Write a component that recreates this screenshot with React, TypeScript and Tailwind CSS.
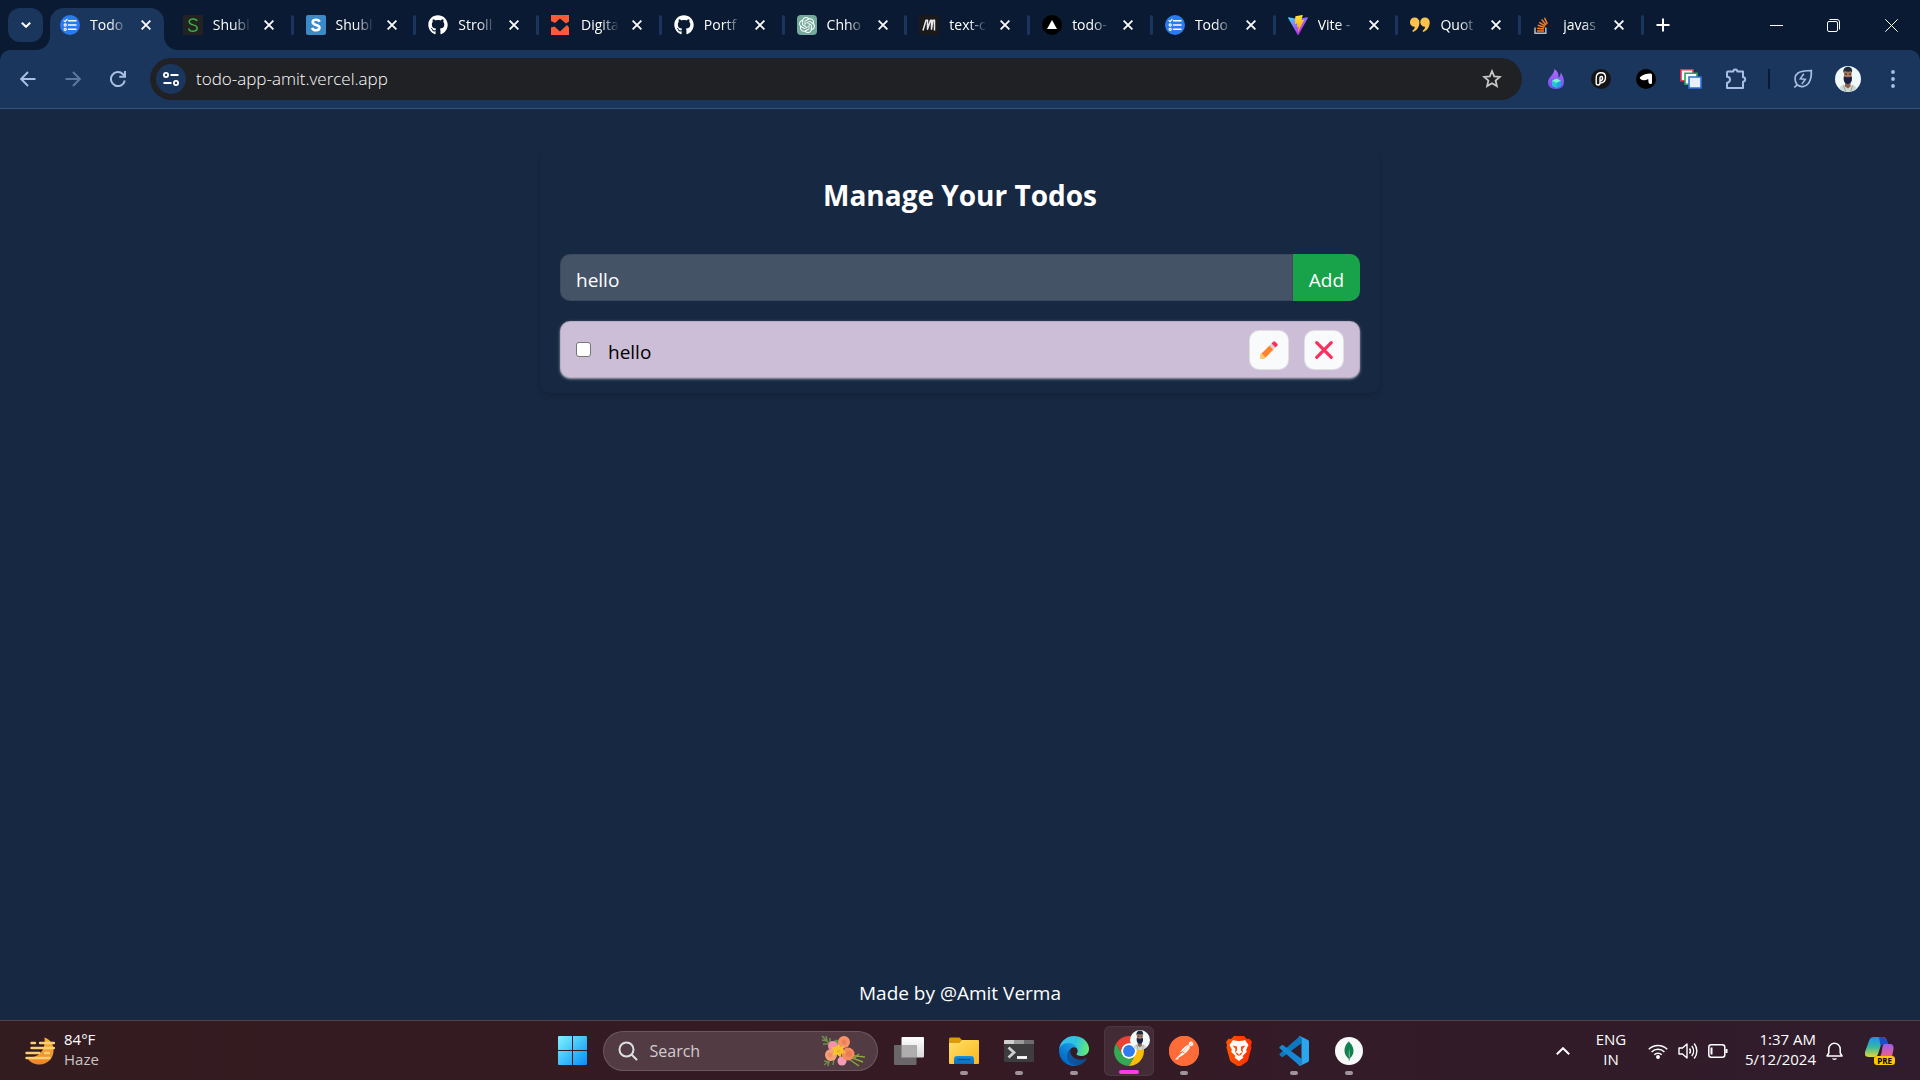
import React, { useState } from "react";
import { FaGithub } from "react-icons/fa";
import { SiPostman, SiMongodb, SiOpenai } from "react-icons/si";

type IconProps = { className?: string };

const TodoFavicon = () => (
  <svg viewBox="0 0 20 20" className="size-5" fill="none">
    <circle cx="10" cy="10" r="10" fill="#2b7af0" />
    <g stroke="#fff" strokeWidth="1.5" strokeLinecap="round">
      <path d="M8.5 5.7h7.5M8.5 10h7.5M8.5 14.3h7.5" />
      <path d="M4 5.6l1.1 1L7 4.3" strokeWidth="1.2" />
      <circle cx="5.2" cy="10" r="1.1" strokeWidth="1.1" />
      <circle cx="5.2" cy="14.3" r="1.1" strokeWidth="1.1" />
    </g>
  </svg>
);

const GreenSFavicon = () => (
  <svg viewBox="0 0 20 20" className="size-5" fill="none">
    <path d="M0 0h20v20H0z" fill="#222" />
    <path d="M14 6.2C13.6 4.5 12 3.9 10.200 3.900 8 3.900 6.200 4.900 6.200 6.700c0 4.200 8 2.200 8 6.400 0 2-1.900 3.100-4.100 3.100-2.300 0-4.100-1-4.400-2.900" stroke="#3fae45" strokeWidth="1.500" />
  </svg>
);

const BlueSFavicon = () => (
  <svg viewBox="0 0 20 20" className="size-5" fill="none">
    <rect width="20" height="20" rx="2" fill="#3a8ac8" />
    <path d="M13.600 6.800C13 5.300 11.700 4.800 10.100 4.800 8 4.800 6.700 5.800 6.700 7.200c0 3.500 6.800 1.900 6.800 5.400 0 1.700-1.500 2.700-3.500 2.700-1.900 0-3.300-.8-3.800-2.500" stroke="#fff" strokeWidth="2.600" />
  </svg>
);

const DigitFavicon = () => (
  <svg viewBox="0 0 20 20" className="size-5" fill="#ff5a36">
    <path d="M0 0h18v6.500l-3 2L9 3.500 4 8 0 6z" />
    <path d="M0 20h18v-7.500l-2-2.500-7 6.500-5.500-5L0 12.500z" />
  </svg>
);

const GptFavicon = () => (
  <span className="flex size-5 items-center justify-center rounded bg-[#74aa9c]">
    <SiOpenai className="size-4 text-white" />
  </span>
);

const MFavicon = () => (
  <svg viewBox="0 0 20 20" className="size-5" fill="none">
    <path d="M0 0h20v20H0z" fill="#1a1a1c" />
    <path d="M4 15.500L7 5.200h1.500v9L11.500 5.200H12.500v9L14 5.200h1.500v10.300" stroke="#e8e8e8" strokeWidth="1.500" strokeLinejoin="round" />
  </svg>
);

const TriangleFavicon = () => (
  <svg viewBox="0 0 20 20" className="size-5">
    <circle cx="10" cy="10" r="10" fill="#000" />
    <path d="M10 5l5 9H5z" fill="#fff" />
  </svg>
);

const ViteFavicon = () => (
  <svg viewBox="0 0 256 257" className="size-5">
    <defs>
      <linearGradient id="viteA" x1="0" x2="0.58" y1="0.08" y2="0.77">
        <stop offset="0" stopColor="#41d1ff" />
        <stop offset="1" stopColor="#bd34fe" />
      </linearGradient>
      <linearGradient id="viteB" x1="0.43" x2="0.5" y1="0.02" y2="0.9">
        <stop offset="0" stopColor="#ffea83" />
        <stop offset="0.1" stopColor="#ffdd35" />
        <stop offset="1" stopColor="#ffa800" />
      </linearGradient>
    </defs>
    <path fill="url(#viteA)" d="M255.153 37.938L134.897 252.976c-2.483 4.440-8.862 4.466-11.382.048L.875 37.958c-2.746-4.814 1.371-10.646 6.827-9.670l120.385 21.517a6.537 6.537 0 0 0 2.322-.004l117.867-21.483c5.438-.991 9.574 4.796 6.877 9.620Z" />
    <path fill="url(#viteB)" d="M185.432.063L96.440 17.501a3.268 3.268 0 0 0-2.634 3.014l-5.474 92.456a3.268 3.268 0 0 0 3.997 3.378l24.777-5.718c2.318-.535 4.413 1.507 3.936 3.838l-7.361 36.047c-.495 2.426 1.782 4.500 4.151 3.780l15.304-4.649c2.372-.720 4.652 1.360 4.150 3.788l-11.698 56.621c-.732 3.542 3.979 5.473 5.943 2.437l1.313-2.028l72.516-144.720c1.215-2.423-.880-5.186-3.540-4.672l-25.505 4.922c-2.396.462-4.435-1.770-3.759-4.114l16.646-57.705c.677-2.350-1.370-4.583-3.769-4.113Z" />
  </svg>
);

const QuoteFavicon = () => (
  <svg viewBox="0 0 20 20" className="size-5" fill="#fcc24c">
    <path d="M4.700 2.500a4.600 4.600 0 0 1 4.700 4.800c0 4.500-2.400 8.200-6.400 9.700l-.8-1.300c1.600-.9 2.500-2.200 2.600-3.900A4.500 4.500 0 0 1 0 7.200a4.600 4.600 0 0 1 4.700-4.700z" />
    <path d="M15 2.500a4.600 4.600 0 0 1 4.700 4.800c0 4.500-2.400 8.200-6.400 9.700l-.8-1.300c1.600-.9 2.500-2.200 2.600-3.900a4.500 4.500 0 0 1-4.800-4.600A4.600 4.600 0 0 1 15 2.500z" />
  </svg>
);

const StackFavicon = () => (
  <svg viewBox="0 0 20 20" className="size-5" fill="none">
    <path d="M2 12.500v5.800h10.800v-5.800" stroke="#bcbbbb" strokeWidth="1.500" />
    <path d="M4 16h7M4.100 13.200l6.900.7M4.800 10.300l6.700 2M6.200 7.300l6 3.500M8.600 4.600l4.500 5.300M11.500 2.700l2.800 6.200" stroke="#f48024" strokeWidth="1.500" />
  </svg>
);

const GithubFavicon = () => <FaGithub className="size-5 text-white" />;

const tabs: { title: string; Icon: React.FC }[] = [
  { title: "Todo", Icon: TodoFavicon },
  { title: "Shubl", Icon: GreenSFavicon },
  { title: "Shubl", Icon: BlueSFavicon },
  { title: "Stroll", Icon: GithubFavicon },
  { title: "Digita", Icon: DigitFavicon },
  { title: "Portf", Icon: GithubFavicon },
  { title: "Chho", Icon: GptFavicon },
  { title: "text-c", Icon: MFavicon },
  { title: "todo-", Icon: TriangleFavicon },
  { title: "Todo", Icon: TodoFavicon },
  { title: "Vite -", Icon: ViteFavicon },
  { title: "Quot", Icon: QuoteFavicon },
  { title: "javas", Icon: StackFavicon },
];

const CloseIcon = () => (
  <svg viewBox="0 0 10 10" className="size-2.5" stroke="currentColor" strokeWidth="1.800">
    <path d="M.6.6l8.800 8.800M9.400.6L.6 9.400" />
  </svg>
);

function Tab({ title, Icon, active }: { title: string; Icon: React.FC; active: boolean }) {
  return (
    <div className={`relative flex h-[50px] min-w-0 flex-1 items-center ${active ? "pl-2.5" : "pl-3"}`}>
      {active && (
        <span className="absolute top-2 right-[7px] bottom-0 left-0 rounded-t-[14px] bg-[#1b365d]">
          <svg viewBox="0 0 14 14" className="absolute bottom-0 -left-[14px] size-3.5" fill="#1b365d">
            <path d="M14 0v14H0A14 14 0 0 0 14 0z" />
          </svg>
          <svg viewBox="0 0 14 14" className="absolute -right-[14px] bottom-0 size-3.5" fill="#1b365d">
            <path d="M0 0v14h14A14 14 0 0 1 0 0z" />
          </svg>
        </span>
      )}
      <span className="relative shrink-0">
        <Icon />
      </span>
      <span className="relative ml-2.5 w-10 text-[14px] leading-5 whitespace-nowrap text-white [mask-image:linear-gradient(to_right,black_20px,transparent_38px)]">
        {title}
      </span>
      <button aria-label={`Close ${title}`} className="relative ml-1.5 flex size-5 shrink-0 items-center justify-center text-white">
        <CloseIcon />
      </button>
      {!active && <span className="ml-auto h-5 w-[3px] shrink-0 rounded bg-[#1b365d]" />}
    </div>
  );
}

function TabStrip() {
  return (
    <div className="flex h-[50px] bg-[#0a1a33]">
      <div className="w-[50px] shrink-0 pt-2 pl-2">
        <button aria-label="Search tabs" className="flex h-[34px] w-[35px] items-center justify-center rounded-xl bg-[#1b365d] text-white">
          <svg viewBox="0 0 10 6" className="h-1.5 w-2.5" fill="none" stroke="currentColor" strokeWidth="2">
            <path d="M.8.8L5 4.800 9.200.8" />
          </svg>
        </button>
      </div>
      <div className="flex min-w-0 flex-1">
        {tabs.map((tab, i) => (
          <Tab key={i} {...tab} active={i === 0} />
        ))}
      </div>
      <div className="flex w-[276px] shrink-0 items-center text-white">
        <button aria-label="New tab" className="ml-1 flex size-[30px] items-center justify-center">
          <svg viewBox="0 0 14 14" className="size-3.5" stroke="currentColor" strokeWidth="2">
            <path d="M7 .5v13M.5 7h13" />
          </svg>
        </button>
        <div className="ml-auto flex">
          <button aria-label="Minimize" className="flex h-[50px] w-[57px] items-center justify-center">
            <svg viewBox="0 0 13 13" className="size-[13px]" stroke="currentColor">
              <path d="M0 6.500h13" />
            </svg>
          </button>
          <button aria-label="Restore" className="flex h-[50px] w-[57px] items-center justify-center">
            <svg viewBox="0 0 13 13" className="size-[13px]" fill="none" stroke="currentColor">
              <rect x=".5" y="2.500" width="10" height="10" rx="1.500" />
              <path d="M2.500.5H10A2.500 2.500 0 0 1 12.500 3v7.500" />
            </svg>
          </button>
          <button aria-label="Close window" className="flex h-[50px] w-[58px] items-center justify-center">
            <svg viewBox="0 0 13 13" className="size-[13px]" stroke="currentColor">
              <path d="M.3.300l12.400 12.400M12.700.3L.3 12.700" />
            </svg>
          </button>
        </div>
      </div>
    </div>
  );
}

const Avatar = ({ className }: IconProps) => (
  <svg viewBox="0 0 26 26" className={className}>
    <defs>
      <clipPath id="avatarClip">
        <circle cx="13" cy="13" r="13" />
      </clipPath>
    </defs>
    <g clipPath="url(#avatarClip)">
      <path d="M0 0h26v26H0z" fill="#f1fafb" />
      <path d="M4 26c0-4 1-6 5-7.500l4 3 4-3c4 1.500 5 3.500 5 7.500z" fill="#cfd8d2" />
      <path d="M10 17h5.500v3.500L13 22.500l-3-2z" fill="#8d6149" />
      <path d="M9 5h7.500v7c0 4-1.500 6-3.700 6S9 16 9 12z" fill="#a87a60" />
      <path d="M8.500 7C7.800 3.500 9.500 1 12.700.8c3.500 0 5 2.200 4.300 6.200l-1-1.700c-2.200.6-4.400.5-6.500-.2z" fill="#202b35" />
      <path d="M8.700 10.500c2.800 1 5.500 1 8.200 0v3.500c-.6 2.600-2 4-4.100 4S9.300 16.600 8.700 14z" fill="#1b2145" />
      <path d="M9.800 8h2.200M14 8h2.200" stroke="#2c2220" strokeWidth="1" />
      <path d="M8.500 19.500L11 26M17.500 19.500L15.500 26" stroke="#8fa59a" strokeWidth="1" />
    </g>
  </svg>
);

const toolBtn = "flex h-[50px] w-[45px] items-center justify-center";

function Toolbar() {
  return (
    <div className="bg-[#0a1a33]">
      <div className="flex h-[59px] items-center rounded-t-[10px] border-b border-[#36507a] bg-[#1b365d] text-[#a8bfe3]">
        <div className="flex w-[150px] shrink-0 items-center pl-[5px]">
          <button aria-label="Back" className={toolBtn}>
            <svg viewBox="0 0 16 16" className="size-4" fill="none" stroke="currentColor" strokeWidth="1.900">
              <path d="M15.500 8H1.500M8 1L1.200 8 8 15" />
            </svg>
          </button>
          <button aria-label="Forward" className={`${toolBtn} text-[#5e799f]`}>
            <svg viewBox="0 0 16 16" className="size-4" fill="none" stroke="currentColor" strokeWidth="1.900">
              <path d="M.5 8h14M8 1l6.800 7L8 15" />
            </svg>
          </button>
          <button aria-label="Reload" className={toolBtn}>
            <svg viewBox="0 0 16 16" className="size-4" fill="none" stroke="currentColor" strokeWidth="2">
              <path d="M14.800 9.500A7 7 0 1 1 13 3.200L15 5.500M15 0v5.800H9.300" />
            </svg>
          </button>
        </div>
        <div className="flex h-[42px] min-w-0 flex-1 items-center rounded-full bg-[#202124] pr-5 pl-1.5">
          <button aria-label="View site information" className="flex size-[30px] shrink-0 items-center justify-center rounded-full bg-[#1b365d] text-white">
            <svg viewBox="0 0 16 14" className="h-3.5 w-4" fill="none" stroke="currentColor" strokeWidth="1.800">
              <circle cx="3" cy="3" r="2.100" />
              <path d="M7.500 3h8M.5 11h8" />
              <circle cx="13" cy="11" r="2.100" />
            </svg>
          </button>
          <input
            aria-label="Address and search bar"
            defaultValue="todo-app-amit.vercel.app"
            className="ml-2.5 min-w-0 flex-1 bg-transparent text-[17px] leading-6 font-light text-white outline-none"
          />
          <button aria-label="Bookmark this tab" className="shrink-0 text-[#c7c7c7]">
            <svg viewBox="0 0 20 20" className="size-5" fill="none" stroke="currentColor" strokeWidth="1.800">
              <path d="M10 2.200l2.200 5.200 5.700.5-4.300 3.700 1.300 5.500L10 14.200l-4.900 2.900 1.300-5.500L2.100 7.900l5.700-.5z" />
            </svg>
          </button>
        </div>
        <div className="flex w-[398px] shrink-0 items-center pl-[11px]">
          <button aria-label="Flame extension" className={toolBtn}>
            <svg viewBox="0 0 20 20" className="size-5">
              <defs>
                <linearGradient id="flame" x1="0" x2="0" y1="0" y2="1">
                  <stop offset="0" stopColor="#b56bff" />
                  <stop offset="1" stopColor="#6a4df0" />
                </linearGradient>
              </defs>
              <path d="M8.500 0c3 2 4.500 5 4 8.500 1.500-.5 2.300-2.500 2-5 1.800 2 3.500 5.500 3.500 9.500 0 4.500-3 7-8 7s-8-2.500-8-6.500c0-3 1.500-4.500 3-6.500 1.800-2.200 3.500-4 3.500-7z" fill="url(#flame)" />
              <path d="M10.500 9.500l4.500 2.300v5L10.500 19 6 16.800v-5z" fill="#22c7d6" />
              <path d="M10.500 9.500l4.500 2.300-4.500 2.300L6 11.800z" fill="#7df0d0" />
              <path d="M10.500 14.100l4.500-2.300v5L10.500 19z" fill="#1fa8e0" />
            </svg>
          </button>
          <button aria-label="Paperclip extension" className={toolBtn}>
            <svg viewBox="0 0 20 20" className="size-5" fill="none">
              <circle cx="10" cy="10" r="10" fill="#151515" />
              <path d="M9 12.500V8.800c0-1.700 2.600-1.700 2.600.2 0 1.800-1 2.700-2.600 2.900M9 11.900v2.300c0 2.300-3.800 2.300-3.800 0V9c0-3.500 2.300-5.200 5-5.200 2.600 0 4.300 1.700 4.300 4.500 0 3-2 5.300-4.700 5.700" stroke="#fff" strokeWidth="1.400" />
            </svg>
          </button>
          <button aria-label="Arrow extension" className={toolBtn}>
            <svg viewBox="0 0 20 20" className="size-5">
              <circle cx="10" cy="10" r="10" fill="#000" />
              <path d="M4 8.200Q6 6 9 5.200q3-.8 5.800-.7 1.200 0 1.200 1.500v7.500q0 1.800-1.500 1.500-2-.3-2-1.800l-.3-3.200q-2 1.200-4.500 1.200-2.700-.2-3.700-1.800-.5-.7 0-1.200z" fill="#fff" />
            </svg>
          </button>
          <button aria-label="Windows extension" className={toolBtn}>
            <svg viewBox="0 0 22 20" className="h-5 w-[22px]">
              <path d="M1 .8h12v11H1z" fill="#fff" stroke="#e8315b" strokeWidth="1.600" />
              <path d="M5 4.300h12v11H5z" fill="#fff" stroke="#28a35a" strokeWidth="1.600" />
              <path d="M9 8h12v11H9z" fill="#e8f0ff" stroke="#2f6fe0" strokeWidth="1.600" />
            </svg>
          </button>
          <button aria-label="Extensions" className={toolBtn}>
            <svg viewBox="0 0 22 22" className="size-[22px]" fill="none" stroke="currentColor" strokeWidth="2" strokeLinejoin="round">
              <path d="M3 3.500h5.300a2 2 0 0 1 4 0H18v5.800a2.200 2.200 0 0 1 0 4.400V20H2v-5.300a3 3 0 0 0 0-6V4.500a1 1 0 0 1 1-1z" />
            </svg>
          </button>
          <span className="mx-2.5 h-5 w-0.5 bg-[#0a1a33]" />
          <button aria-label="Energy saver" className={toolBtn}>
            <svg viewBox="0 0 20 20" className="size-5" fill="none" stroke="currentColor" strokeWidth="1.700">
              <path d="M1.300 18.500l2.800-2.700C1 11 1.500 6.500 5 4c3.500-2.300 8-2 13.300-2.500.3 5-.3 9.500-3 13-3 3.700-7.600 4-11.200 1.300" />
              <path d="M10.800 4.800L7.300 9.800l5 .5-3.500 4.800" strokeWidth="1.500" />
            </svg>
          </button>
          <button aria-label="Profile" className={toolBtn}>
            <Avatar className="size-[26px]" />
          </button>
          <button aria-label="Menu" className={toolBtn}>
            <svg viewBox="0 0 4 18" className="h-[18px] w-1" fill="currentColor">
              <circle cx="2" cy="2" r="1.900" />
              <circle cx="2" cy="9" r="1.900" />
              <circle cx="2" cy="16" r="1.900" />
            </svg>
          </button>
        </div>
      </div>
    </div>
  );
}

const PencilIcon = () => (
  <svg viewBox="0 0 20 20" className="size-5">
    <path d="M1.300 14.500L3 13l4 4-1.800 2H1z" fill="#ffc56e" />
    <path d="M2.600 13.400L10.500 5.500l4 4-7.900 7.900z" fill="#ff822d" />
    <path d="M10.500 5.500l2-2 4 4-2 2z" fill="#d3d3d3" />
    <path d="M12.500 3.500l1.700-1.800q1-1 2 0l2.100 2.100q1 1 0 2L16.500 7.500z" fill="#f92f60" />
  </svg>
);

const CrossIcon = () => (
  <svg viewBox="0 0 20 20" className="size-5" stroke="#f92f60" strokeWidth="3.200" strokeLinecap="round">
    <path d="M2.700 2.700l14.600 14.600M17.300 2.700L2.700 17.300" />
  </svg>
);

function TodoPage() {
  const [text, setText] = useState("hello");
  const [done, setDone] = useState(false);
  const actionBtn = "flex size-10 shrink-0 items-center justify-center rounded-[10px] border border-black/10 bg-gray-50";
  return (
    <main className="flex flex-1 flex-col bg-[#172842] pt-10 text-white">
      <div className="mx-auto w-full max-w-[840px] rounded-[10px] px-5 py-[15px] shadow-md">
        <h1 className="mt-[11px] mb-[39px] text-center text-[28px] leading-10 font-bold">Manage Your Todos</h1>
        <form className="mb-5 flex h-[47px]" onSubmit={(e) => e.preventDefault()}>
          <input
            aria-label="New todo"
            value={text}
            onChange={(e) => setText(e.target.value)}
            className="min-w-0 flex-1 rounded-l-[10px] border border-black/10 bg-white/20 px-[15px] pt-1.5 text-[19px] outline-none"
          />
          <button className="w-[67px] shrink-0 rounded-r-[10px] bg-[#18a34a] pt-1.5 text-[19px]">Add</button>
        </form>
        <div className="flex h-[57px] items-center rounded-[10px] border border-black/10 bg-[#ccbed7] px-[15px] text-black shadow-sm shadow-white/50">
          <input
            id="todo-1"
            type="checkbox"
            checked={done}
            onChange={() => setDone(!done)}
            className="size-[15px] shrink-0 appearance-none rounded-[3px] border border-[#767676] bg-white checked:bg-blue-600"
          />
          <label htmlFor="todo-1" className="ml-[17px] flex-1 pt-1 text-[19px] leading-[30px]">
            hello
          </label>
          <div className="flex gap-[15px]">
            <button aria-label="Edit todo" className={actionBtn}>
              <PencilIcon />
            </button>
            <button aria-label="Delete todo" className={actionBtn}>
              <CrossIcon />
            </button>
          </div>
        </div>
      </div>
      <footer className="mt-auto pb-3 text-center text-[19px] leading-[30px]">Made by @Amit Verma</footer>
    </main>
  );
}

const WeatherIcon = () => (
  <svg viewBox="0 0 30 28" className="h-7 w-[30px]" fill="none">
    <defs>
      <linearGradient id="moon" x1="0" x2="0" y1="0" y2="1">
        <stop offset="0" stopColor="#f9b43a" />
        <stop offset="1" stopColor="#f08323" />
      </linearGradient>
    </defs>
    <path d="M19.500.5C26 3 29 8 28.500 14.500 28 22 22 27.500 14.500 27.500 9 27.500 4.500 25 2 20.500c10 .5 19-5 17.500-20z" fill="url(#moon)" />
    <g stroke="#f8cf73" strokeWidth="2.400" strokeLinecap="round">
      <path d="M6.500 6h3.500M15 6h14M6.500 11h22.500M1.500 16h13M20 16h4M1.500 21h23" />
    </g>
  </svg>
);

const StartIcon = () => (
  <svg viewBox="0 0 29 29" className="size-[29px]">
    <defs>
      <linearGradient id="win" x1="0" x2="29" y1="0" y2="29" gradientUnits="userSpaceOnUse">
        <stop offset="0" stopColor="#84f3ff" />
        <stop offset="0.5" stopColor="#3fc1fb" />
        <stop offset="1" stopColor="#0a8cf5" />
      </linearGradient>
    </defs>
    <path fill="url(#win)" d="M1 0h13v14H0V1a1 1 0 0 1 1-1zM15 0h13a1 1 0 0 1 1 1v13H15zM0 15h14v14H1a1 1 0 0 1-1-1zM15 15h14v13a1 1 0 0 1-1 1H15z" />
  </svg>
);

const BouquetIcon = () => (
  <svg viewBox="0 0 44 32" className="h-8 w-11" fill="none">
    <g stroke="#6f8f4a" strokeWidth="1.500">
      <path d="M1 1l9 9M1 5l5 1M5 1l1 5M2 9h7M9 3v6M3 30l8-6M3 26l5 1M7 31l1-5M12 30l1-6" />
      <path d="M26 20l18 2M26 21l16 6M25 22l13 9M38 19l-6 5" stroke="#86a83c" />
    </g>
    <path d="M13 5c4-1 8 2 9 6l-6-1z" fill="#5f8f45" />
    <circle cx="12" cy="11" r="5" fill="#f58fae" />
    <circle cx="21" cy="26" r="4.500" fill="#f79ab8" />
    <circle cx="23" cy="7" r="6" fill="#f6936a" />
    <circle cx="10" cy="20" r="6" fill="#f6a07a" />
    <circle cx="27" cy="19" r="6.500" fill="#f28b60" />
    <circle cx="23" cy="7" r="2.500" fill="#ec7f56" />
    <circle cx="9" cy="20" r="2.500" fill="#ee8d66" />
    <circle cx="28" cy="19" r="3" fill="#e87c54" />
    <path d="M18 9l1.500 3 4-1-1.500 4 3 3-4.500.5-1 4-3.500-3-4.500 1 1.500-4.500-3-3.500 4.500-.5z" fill="#f6c32f" />
    <circle cx="17.500" cy="16" r="1.800" fill="#efb024" />
  </svg>
);

const TaskViewIcon = () => (
  <svg viewBox="0 0 30 28" className="h-7 w-[30px]">
    <defs>
      <linearGradient id="tv" x1="0" x2="0" y1="0" y2="1">
        <stop offset="0" stopColor="#fff" />
        <stop offset="1" stopColor="#d9d9d9" />
      </linearGradient>
    </defs>
    <rect x="7.500" width="22.500" height="20.500" rx="1" fill="url(#tv)" />
    <rect y="8" width="22.500" height="20" rx="1" fill="#6b6669" />
    <path d="M7.500 8h15v12.500h-15z" fill="#b0adae" />
  </svg>
);

const ExplorerIcon = () => (
  <svg viewBox="0 0 30 28" className="h-7 w-[30px]">
    <defs>
      <linearGradient id="folder" x1="0" x2="1" y1="0" y2="1">
        <stop offset="0" stopColor="#ffdf6a" />
        <stop offset="1" stopColor="#fbb81c" />
      </linearGradient>
      <linearGradient id="folderBlue" x1="0" x2="0" y1="0" y2="1">
        <stop offset="0" stopColor="#1690dc" />
        <stop offset="1" stopColor="#0a6ebd" />
      </linearGradient>
    </defs>
    <path d="M0 2a1.500 1.500 0 0 1 1.500-1.500h9L13 3h16v5H0z" fill="#dc9b0c" />
    <path d="M0 6h10.500L13 3h16a1 1 0 0 1 1 1v22a1 1 0 0 1-1 1H1a1 1 0 0 1-1-1z" fill="url(#folder)" />
    <path d="M5 27v-5a3 3 0 0 1 3-3h14a3 3 0 0 1 3 3v5z" fill="url(#folderBlue)" />
    <path d="M8.500 22.500h13" stroke="#0a4f93" strokeWidth="1.300" />
  </svg>
);

const TerminalIcon = () => (
  <svg viewBox="0 0 30 22" className="h-[22px] w-[30px]" fill="none">
    <rect width="30" height="22" rx="1.500" fill="#3d3d3f" />
    <path d="M1 0h9v4H0V1a1 1 0 0 1 1-1z" fill="#cfcfcf" />
    <path d="M10 0h10v4H10z" fill="#9a9a9a" />
    <path d="M20 0h9a1 1 0 0 1 1 1v3H20z" fill="#6d6d6d" />
    <path d="M4.500 7.500l5.500 5-5.500 5" stroke="#cfcfcf" strokeWidth="2.800" />
    <path d="M13 17.500h10" stroke="#fff" strokeWidth="2.800" />
  </svg>
);

const EdgeIcon = () => (
  <svg viewBox="0 0 256 256" className="size-[30px]">
    <defs>
      <linearGradient id="edgeA" x1="60" x2="240" y1="177" y2="177" gradientUnits="userSpaceOnUse">
        <stop offset="0" stopColor="#0c59a4" />
        <stop offset="1" stopColor="#114a8b" />
      </linearGradient>
      <linearGradient id="edgeB" x1="150" x2="40" y1="90" y2="220" gradientUnits="userSpaceOnUse">
        <stop offset="0" stopColor="#1b9de2" />
        <stop offset="1" stopColor="#0067c8" />
      </linearGradient>
      <linearGradient id="edgeC" x1="10" x2="250" y1="60" y2="130" gradientUnits="userSpaceOnUse">
        <stop offset="0" stopColor="#35c1f1" />
        <stop offset="0.500" stopColor="#2fc2df" />
        <stop offset="1" stopColor="#66eb6e" />
      </linearGradient>
    </defs>
    <path fill="url(#edgeA)" d="M231.050 190.540a93.730 93.730 0 0 1-10.540 4.710 101.870 101.870 0 0 1-35.900 6.460c-47.320 0-88.540-32.550-88.540-74.320a31.480 31.480 0 0 1 16.430-27.310c-42.800 1.800-53.800 46.400-53.800 72.530 0 73.880 68.090 81.370 82.760 81.370 7.910 0 19.840-2.300 27-4.560l1.310-.440a128.340 128.340 0 0 0 66.600-52.800 4 4 0 0 0-5.320-5.640z" />
    <path fill="url(#edgeB)" d="M105.730 241.420a79.200 79.200 0 0 1-22.740-21.340 80.720 80.720 0 0 1 29.530-120c3.120-1.470 8.450-4.130 15.540-4a32.350 32.350 0 0 1 25.690 13 31.880 31.880 0 0 1 6.360 18.660c0-.210 24.460-79.600-80-79.600-43.900 0-80 41.660-80 78.210a130.150 130.150 0 0 0 12.110 56 128 128 0 0 0 156.380 67.110 75.550 75.550 0 0 1-62.780-8z" />
    <path fill="url(#edgeC)" d="M152.330 148.860c-.810 1.050-3.300 2.500-3.300 5.660 0 2.610 1.700 5.120 4.720 7.230 14.380 10 41.490 8.680 41.560 8.680a59.560 59.560 0 0 0 30.270-8.350 61.380 61.380 0 0 0 30.430-52.880c.260-22.410-8-37.310-11.340-43.910C223.460 23.840 177.720 0 128 0A128 128 0 0 0 0 126.200c.480-36.540 36.800-66.050 80-66.050 3.500 0 23.460.340 42 10.070 16.340 8.580 24.900 18.940 30.850 29.210 6.180 10.670 7.280 24.150 7.280 29.520s-2.740 13.330-7.800 19.910z" />
  </svg>
);

const ChromeIcon = () => (
  <svg viewBox="2 2 44 44" className="size-[30px]">
    <circle cx="24" cy="24" r="12" fill="#fff" />
    <path fill="#ea4335" d="M4.950 13A22 22 0 0 1 43.050 13H24A11 11 0 0 0 14.470 29.500z" />
    <path fill="#34a853" d="M4.950 13A22 22 0 0 0 24 46l9.530-16.500A11 11 0 0 1 14.470 29.500z" />
    <path fill="#fbbc05" d="M43.050 13A22 22 0 0 1 24 46l9.530-16.500A11 11 0 0 0 24 13z" />
    <circle cx="24" cy="24" r="11" fill="#fff" />
    <circle cx="24" cy="24" r="8.700" fill="#2f7bf0" />
  </svg>
);

const VsCodeIcon = () => (
  <svg viewBox="0 0 100 100" className="size-[30px]">
    <path fill="#0b78c0" d="M2 63l6 6q3 2 6 0L75 24V8Q74-1 66 3L3 58q-3 2-1 5z" />
    <path fill="#1688d3" d="M2 37l6-6q3-2 6 0l61 45v16q-1 9-9 5L3 42q-3-2-1-5z" />
    <path fill="#29a6ee" d="M71 99.500L97 87q3-2 3-5V18q0-3-3-5L71 .5q-4-1-6 3 9-4 10 5v83q-1 9-10 5 2 4 6 3z" />
  </svg>
);

const PostmanIcon = () => (
  <span className="flex size-[30px] items-center justify-center rounded-full bg-[radial-gradient(circle,white_60%,#ff6c37_62%)]">
    <SiPostman className="size-[30px] text-[#ff6c37]" />
  </span>
);

const BraveIcon = () => (
  <svg viewBox="0 0 26 30" className="h-[30px] w-[26px]">
    <defs>
      <linearGradient id="brave" x1="0" x2="1" y1="0" y2="0">
        <stop offset="0" stopColor="#ff5601" />
        <stop offset="1" stopColor="#ff2b00" />
      </linearGradient>
    </defs>
    <path d="M8 0h10l3 3 2.500-.3L26 6l-1 3 .5 2.500-3.300 12.300q-.5 1.500-2 2.500L14.500 30h-3l-5.700-3.700q-1.500-1-2-2.500L.5 11.500 1 9 0 6l2.500-3.300L5 3z" fill="url(#brave)" />
    <path d="M13 5l3.500-.3L19 4l3.500 5-2.300 4.500.5 2.500-4.200 4 1 1.500L13 25l-4.500-3.500 1-1.500-4.200-4 .5-2.500L3.500 9 7 4l2.500.7z" fill="#fff" />
    <path d="M6.500 9.500l4.500 1v4L9.500 16l2.500 1.500L13 19l1-1.500 2.500-1.500-1.500-1.500v-4l4.500-1-3 3.500.5 2.500-2 3.500-2 .8-2-.8-2-3.500.5-2.500z" fill="#ff4a01" />
  </svg>
);

const MongoIcon = () => (
  <span className="flex size-7 items-center justify-center rounded-full bg-[#f7f9f8]">
    <SiMongodb className="size-5 text-[#10804f]" />
  </span>
);

const apps: { name: string; Icon: React.FC; running: boolean; active?: boolean }[] = [
  { name: "File Explorer", Icon: ExplorerIcon, running: true },
  { name: "Terminal", Icon: TerminalIcon, running: true },
  { name: "Edge", Icon: EdgeIcon, running: true },
  { name: "Chrome", Icon: ChromeIcon, running: true, active: true },
  { name: "Postman", Icon: PostmanIcon, running: true },
  { name: "Brave", Icon: BraveIcon, running: false },
  { name: "VS Code", Icon: VsCodeIcon, running: true },
  { name: "MongoDB Compass", Icon: MongoIcon, running: true },
];

const CopilotIcon = () => (
  <span className="relative block h-7 w-[30px]">
    <svg viewBox="0 0 30 28" className="h-7 w-[30px]">
      <defs>
        <linearGradient id="copA" x1="0" x2="0" y1="0" y2="1">
          <stop offset="0" stopColor="#1f8df5" />
          <stop offset="0.500" stopColor="#35b8a0" />
          <stop offset="1" stopColor="#e3d73a" />
        </linearGradient>
        <linearGradient id="copB" x1="0" x2="0" y1="0" y2="1">
          <stop offset="0" stopColor="#a05cf0" />
          <stop offset="1" stopColor="#f5617e" />
        </linearGradient>
      </defs>
      <path d="M9 0h9q3 0 4 4l1 3h-5q-2 0-3 4l-2 6q-1 3-4 3H4q-5 0-4-5L4 4q1-4 5-4z" fill="url(#copA)" />
      <path d="M14 0h4q3 0 4 4l1 3h-5q-2 0-2.500 2z" fill="#1a4fd0" />
      <path d="M19 7h6q4 0 3.500 5L27 20H14q2-1 2.500-4l1-6q.5-3 1.500-3z" fill="url(#copB)" />
    </svg>
    <span className="absolute right-0 bottom-0 rounded-[3px] bg-[#ffc60b] px-[3px] text-[8px] leading-[9px] font-bold text-black">PRE</span>
  </span>
);

function Taskbar() {
  return (
    <div className="grid h-[60px] grid-cols-[1fr_auto_1fr] border-t border-[#554044] bg-linear-to-r from-[#331c20] via-[#351a24] to-[#301c2c] text-[15px] leading-5 text-white">
      <button className="flex items-center gap-[9px] justify-self-start pl-[25px] text-left">
        <WeatherIcon />
        <span className="pb-1">
          <span className="block">84°F</span>
          <span className="block text-[#cdc3c5]">Haze</span>
        </span>
      </button>
      <div className="flex items-center">
        <button aria-label="Start" className="flex size-[50px] items-center justify-center pl-px">
          <StartIcon />
        </button>
        <label className="mx-1.5 flex h-10 w-[275px] items-center rounded-full border border-white/15 bg-[#523b43] pr-3 pl-3.5">
          <svg viewBox="0 0 20 20" className="size-5 shrink-0" fill="none" stroke="#dcdfe4" strokeWidth="2" strokeLinecap="round">
            <circle cx="8.500" cy="8.500" r="7" />
            <path d="M13.800 13.800L18.500 18.500" />
          </svg>
          <input
            aria-label="Search"
            placeholder="Search"
            className="ml-3 min-w-0 flex-1 bg-transparent text-[16px] outline-none placeholder:text-[#d4cccf]"
          />
          <BouquetIcon />
        </label>
        <button aria-label="Task view" className="flex size-[50px] items-center justify-center">
          <TaskViewIcon />
        </button>
        <div className="ml-[5px] flex gap-[5px]">
          {apps.map(({ name, Icon, running, active }) => (
            <button
              key={name}
              aria-label={name}
              className={`relative flex size-[50px] items-center justify-center rounded-md ${active ? "border border-white/5 bg-white/8" : ""}`}
            >
              <Icon />
              {active && <Avatar className="absolute top-[3px] right-[3px] size-5" />}
              {running && (
                <span className={`absolute bottom-px h-1 rounded-full ${active ? "w-5 bg-[#ff3ae6]" : "w-2 bg-[#a0949a]"}`} />
              )}
            </button>
          ))}
        </div>
      </div>
      <div className="flex items-center justify-self-end pr-[25px]">
        <button aria-label="Show hidden icons" className="flex size-10 items-center justify-center">
          <svg viewBox="0 0 14 8" className="h-2 w-3.5" fill="none" stroke="currentColor" strokeWidth="2">
            <path d="M.8 7.200L7 1.200l6.200 6" />
          </svg>
        </button>
        <button className="mr-[17px] ml-2 w-10 pb-1 text-center">
          ENG
          <br />
          IN
        </button>
        <button aria-label="Network, volume and battery" className="mr-[17px] flex items-center gap-2.5">
          <svg viewBox="0 0 20 16" className="h-4 w-5" fill="none" stroke="currentColor" strokeWidth="1.500">
            <path d="M.8 6.200a13 13 0 0 1 18.400 0M3.600 9a9 9 0 0 1 12.800 0M6.300 11.800a5.200 5.200 0 0 1 7.400 0" />
            <circle cx="10" cy="14" r="1.200" fill="currentColor" />
          </svg>
          <svg viewBox="0 0 20 18" className="h-[18px] w-5" fill="none" stroke="currentColor" strokeWidth="1.400">
            <path d="M1 6h3.500L9 2v14l-4.500-4H1z" strokeLinejoin="round" />
            <path d="M11.500 6.500a4 4 0 0 1 0 5M13.800 4a8 8 0 0 1 0 10M16.200 1.500a12 12 0 0 1 0 15" />
          </svg>
          <svg viewBox="0 0 20 14" className="h-3.5 w-5" fill="none" stroke="currentColor" strokeWidth="1.500">
            <rect x=".8" y=".8" width="16" height="12.400" rx="2.500" />
            <path d="M18.500 5v4M3.500 3.500v7" strokeWidth="2" />
          </svg>
        </button>
        <button className="pb-1 text-right">
          1:37 AM
          <br />
          5/12/2024
        </button>
        <button aria-label="Notifications" className="mr-3 ml-2.5">
          <svg viewBox="0 0 17 18" className="h-[18px] w-[17px]" fill="none" stroke="currentColor" strokeWidth="1.500" strokeLinejoin="round">
            <path d="M1 14l1.800-3V7a5.700 5.700 0 0 1 11.400 0v4l1.800 3z" />
            <path d="M6.500 16.500q2 1.500 4 0" />
          </svg>
        </button>
        <button aria-label="Copilot" className="ml-2.5">
          <CopilotIcon />
        </button>
      </div>
    </div>
  );
}

export default function App() {
  return (
    <div className="flex min-h-screen flex-col font-['Segoe_UI','Open_Sans',sans-serif]">
      <TabStrip />
      <Toolbar />
      <TodoPage />
      <Taskbar />
    </div>
  );
}
